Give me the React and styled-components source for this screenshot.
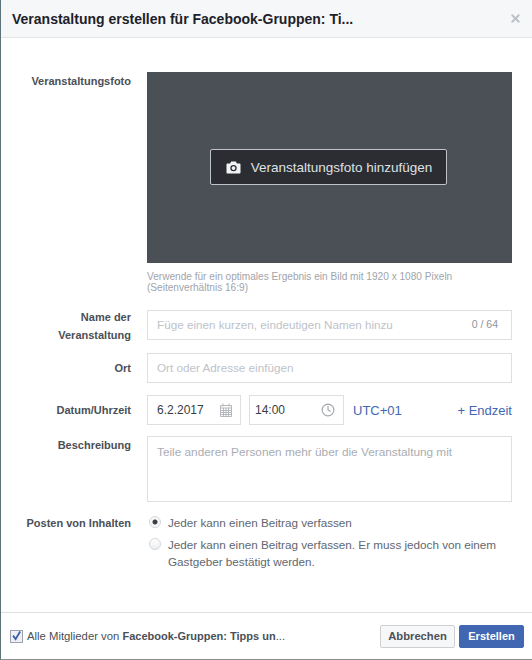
import React from "react";
import styled, { createGlobalStyle } from "styled-components";
import { Clock, X } from "lucide-react";

const GlobalStyle = createGlobalStyle`
  html, body {
    margin: 0;
    padding: 0;
    background: #fff;
  }
  * {
    box-sizing: border-box;
  }
`;

const CameraIcon = () => (
  <svg width="15" height="13" viewBox="0 0 15 13">
    <path
      fill="#f2f3f5"
      fillRule="evenodd"
      d="M1.5 2.5h2.6L5.2.6h4.6l1.1 1.9h2.6c.6 0 1 .4 1 1v8c0 .6-.4 1-1 1h-12c-.6 0-1-.4-1-1v-8c0-.6.4-1 1-1zM7.5 3.9a3.2 3.2 0 1 0 0 6.4 3.2 3.2 0 0 0 0-6.4zm0 1.3a1.9 1.9 0 1 1 0 3.8 1.9 1.9 0 0 1 0-3.8z"
    />
  </svg>
);

const CalendarIcon = () => (
  <svg width="12" height="14" viewBox="0 0 12 14" fill="none" stroke="#b4b7bc" strokeWidth="1">
    <path d="M.5 2.5h11v11H.5zM.5 5h11M3 .5v3M9 .5v3M.5 7.5h11M.5 9.5h11M.5 11.5h11M3.5 5v8.5M6 5v8.5M8.5 5v8.5" />
  </svg>
);

const CheckIcon = () => (
  <svg width="12" height="12" viewBox="0 0 12 12">
    <path d="M2.3 5.6 5 9.4 10 1" fill="none" stroke="#3f5fa8" strokeWidth="2" />
  </svg>
);

export default function App() {
  return (
    <>
      <GlobalStyle />
      <Modal>
        <Header>
          <Title>Veranstaltung erstellen für Facebook-Gruppen: Ti...</Title>
          <X size={13} color="#bcc0c7" strokeWidth={3.5} />
        </Header>
        <Body>
          <Row $gap={17}>
            <Label $top={0}>Veranstaltungsfoto</Label>
            <Field>
              <PhotoBox>
                <PhotoButton>
                  <CameraIcon />
                  Veranstaltungsfoto hinzufügen
                </PhotoButton>
              </PhotoBox>
              <Hint>
                Verwende für ein optimales Ergebnis ein Bild mit 1920 x 1080 Pixeln
                <br />
                (Seitenverhältnis 16:9)
              </Hint>
            </Field>
          </Row>
          <Row $gap={9}>
            <Label $top={-2}>
              Name der
              <br />
              Veranstaltung
            </Label>
            <Field>
              <InputBox>
                <Placeholder>Füge einen kurzen, eindeutigen Namen hinzu</Placeholder>
                <Counter>0 / 64</Counter>
              </InputBox>
            </Field>
          </Row>
          <Row $gap={12}>
            <Label $top={6}>Ort</Label>
            <Field>
              <InputBox>
                <Placeholder>Ort oder Adresse einfügen</Placeholder>
              </InputBox>
            </Field>
          </Row>
          <Row $gap={11}>
            <Label $top={6}>Datum/Uhrzeit</Label>
            <DateField>
              <SmallInput $width={94} $left={9}>
                <Value>6.2.2017</Value>
                <CalendarIcon />
              </SmallInput>
              <SmallInput $width={95} $left={5}>
                <Value>14:00</Value>
                <Clock size={14} color="#a3a6ab" strokeWidth={2} />
              </SmallInput>
              <LinkText>UTC+01</LinkText>
              <EndLink>+ Endzeit</EndLink>
            </DateField>
          </Row>
          <Row $gap={12}>
            <Label $top={0}>Beschreibung</Label>
            <Field>
              <TextBox>Teile anderen Personen mehr über die Veranstaltung mit</TextBox>
            </Field>
          </Row>
          <Row $gap={0}>
            <Label $top={0}>Posten von Inhalten</Label>
            <RadioList>
              <RadioRow>
                <Radio $checked />
                <RadioText>Jeder kann einen Beitrag verfassen</RadioText>
              </RadioRow>
              <RadioRow>
                <Radio />
                <RadioText>
                  Jeder kann einen Beitrag verfassen. Er muss jedoch von einem Gastgeber
                  bestätigt werden.
                </RadioText>
              </RadioRow>
            </RadioList>
          </Row>
        </Body>
        <Footer>
          <CheckBox>
            <CheckIcon />
          </CheckBox>
          <FooterText>
            Alle Mitglieder von <strong>Facebook-Gruppen: Tipps un</strong>...
          </FooterText>
          <CancelButton>Abbrechen</CancelButton>
          <CreateButton>Erstellen</CreateButton>
        </Footer>
      </Modal>
    </>
  );
}

const Modal = styled.div`
  width: 532px;
  height: 660px;
  display: flex;
  flex-direction: column;
  background: #fff;
  border-left: 1px solid #5f7478;
  border-bottom: 1px solid #8b8d90;
  font-family: "Liberation Sans", Arial, sans-serif;
  overflow: hidden;
`;

const Header = styled.div`
  height: 38px;
  flex: none;
  display: flex;
  align-items: center;
  justify-content: space-between;
  padding: 0 10px 0 11px;
  background: #f6f7f9;
  border-bottom: 1px solid #e5e5e5;
`;

const Title = styled.div`
  font-size: 14px;
  font-weight: bold;
  color: #1d2129;
`;

const Body = styled.div`
  flex: 1;
  padding-top: 34px;
`;

const Row = styled.div`
  display: flex;
  margin-bottom: ${(p) => p.$gap}px;
`;

const Label = styled.div`
  width: 130px;
  flex: none;
  margin-right: 16px;
  margin-top: ${(p) => p.$top}px;
  text-align: right;
  font-size: 11px;
  font-weight: bold;
  line-height: 18px;
  color: #4b4f56;
`;

const Field = styled.div`
  width: 365px;
  flex: none;
`;

const PhotoBox = styled.div`
  height: 191px;
  display: flex;
  align-items: center;
  justify-content: center;
  background: #4b4f56;
`;

const PhotoButton = styled.div`
  width: 237px;
  height: 36px;
  margin: -1px 2px 0 0;
  padding-left: 1px;
  display: flex;
  align-items: center;
  justify-content: center;
  gap: 10px;
  background: #2b2d33;
  border: 1px solid #bfc2c7;
  border-radius: 2px;
  color: #dfe1e5;
  font-size: 13.5px;
`;

const Hint = styled.div`
  margin-top: 8px;
  font-size: 10.1px;
  line-height: 11px;
  color: #a0a4ab;
`;

const InputBox = styled.div`
  height: 30px;
  display: flex;
  align-items: center;
  justify-content: space-between;
  padding: 0 13px 2px 9px;
  border: 1px solid #dddfe2;
`;

const Placeholder = styled.span`
  font-size: 11.7px;
  color: #bec3c9;
`;

const Counter = styled.span`
  font-size: 10.5px;
  color: #90949c;
`;

const DateField = styled.div`
  width: 365px;
  flex: none;
  display: flex;
  align-items: center;
`;

const SmallInput = styled.div`
  width: ${(p) => p.$width}px;
  height: 30px;
  display: flex;
  align-items: center;
  justify-content: space-between;
  padding: 0 8px 0 ${(p) => p.$left}px;
  margin-right: 8px;
  border: 1px solid #dddfe2;
`;

const Value = styled.span`
  font-size: 12px;
  color: #3a3d44;
`;

const LinkText = styled.span`
  margin-left: 1px;
  font-size: 13px;
  color: #4267b2;
`;

const EndLink = styled.span`
  margin-left: auto;
  font-size: 13px;
  color: #4267b2;
`;

const TextBox = styled.div`
  height: 66px;
  padding: 8px 9px;
  border: 1px solid #dddfe2;
  font-size: 11.8px;
  line-height: 15px;
  color: #a9adb3;
`;

const RadioList = styled.div`
  width: 365px;
  flex: none;
  display: flex;
  flex-direction: column;
  gap: 5px;
`;

const RadioRow = styled.div`
  display: flex;
  align-items: flex-start;
`;

const Radio = styled.span`
  width: 12px;
  height: 12px;
  flex: none;
  margin: 2px 7px 0 2px;
  border-radius: 50%;
  border: 1px solid #d3d6db;
  background: ${(p) =>
    p.$checked
      ? "radial-gradient(circle, #3b3f46 0 2px, #f8f8f9 3px)"
      : "linear-gradient(#fff, #eceef0)"};
`;

const RadioText = styled.span`
  font-size: 11.7px;
  line-height: 17px;
  color: #616770;
`;

const Footer = styled.div`
  height: 47px;
  flex: none;
  display: flex;
  align-items: center;
  padding: 0 8px 0 9px;
  border-top: 1px solid #dddfe2;
`;

const CheckBox = styled.span`
  width: 13px;
  height: 13px;
  flex: none;
  display: flex;
  align-items: center;
  justify-content: center;
  border: 1px solid #9ba2b0;
  background: #eef0f5;
`;

const FooterText = styled.span`
  margin-left: 4px;
  font-size: 11.3px;
  color: #4b4f56;
  flex: 1;
  strong {
    font-size: 11px;
  }
`;

const CancelButton = styled.div`
  width: 75px;
  height: 23px;
  display: flex;
  align-items: center;
  justify-content: center;
  background: #f6f7f9;
  border: 1px solid #ced0d4;
  border-radius: 2px;
  font-size: 11.2px;
  font-weight: bold;
  color: #4b4f56;
`;

const CreateButton = styled.div`
  width: 65px;
  height: 23px;
  margin-left: 4px;
  display: flex;
  align-items: center;
  justify-content: center;
  background: #4267b2;
  border: 1px solid #4267b2;
  border-radius: 2px;
  font-size: 11px;
  font-weight: bold;
  color: #fff;
`;
